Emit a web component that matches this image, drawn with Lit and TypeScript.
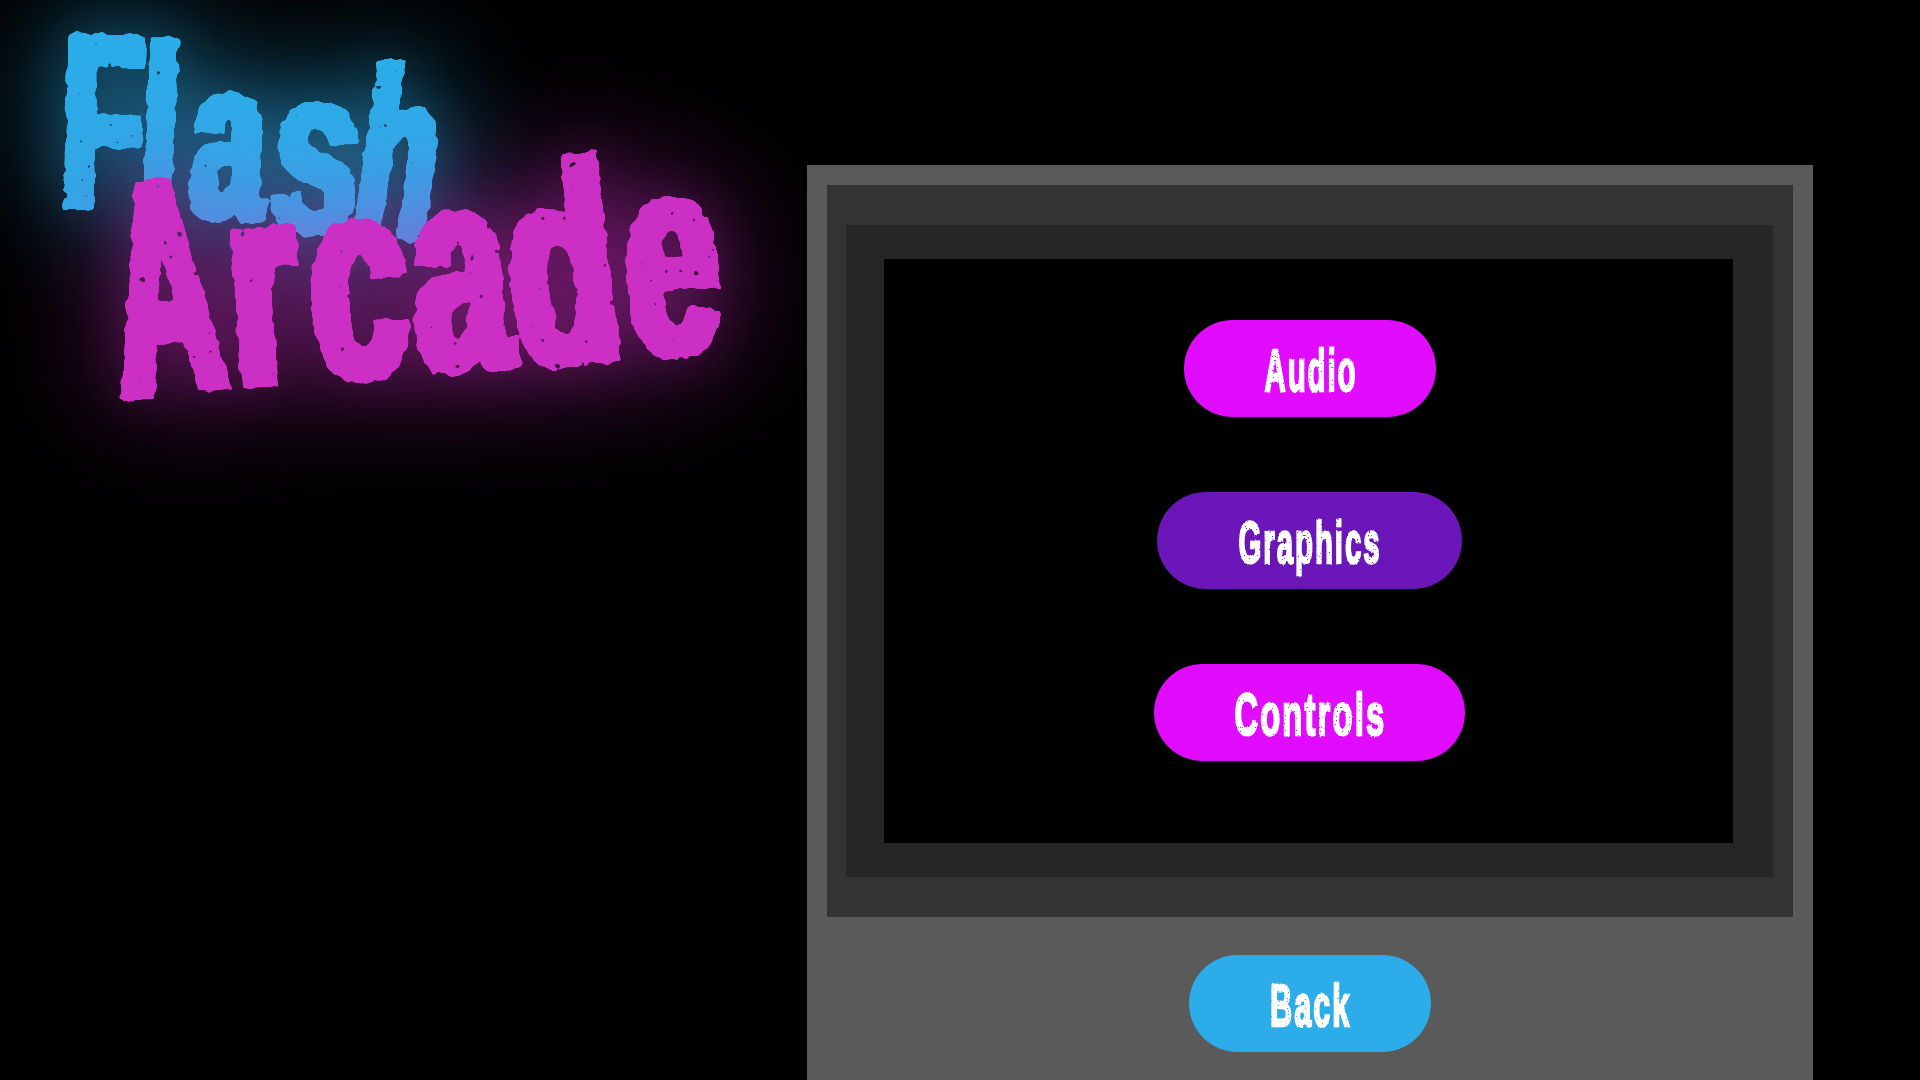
import { LitElement, html, css } from "lit";
import { customElement } from "lit/decorators.js";

interface Glyph { c: string; x: number; y: number; r: number; sx: number; sy: number; }

const FLASH: Glyph[] = [
  { c: "F", x: 60, y: 208, r: 1.3, sx: 0.58, sy: 1.08 },
  { c: "l", x: 139, y: 212, r: 2.5, sx: 0.56, sy: 1.03 },
  { c: "a", x: 188, y: 217, r: 3, sx: 0.575, sy: 1.0 },
  { c: "s", x: 268, y: 229, r: 5, sx: 0.66, sy: 1.03 },
  { c: "h", x: 350, y: 231, r: 8, sx: 0.55, sy: 1.03 },
];
const ARCADE: Glyph[] = [
  { c: "A", x: 124, y: 397, r: -6.5, sx: 0.52, sy: 1.08 },
  { c: "r", x: 236, y: 385, r: -4.5, sx: 0.62, sy: 1.02 },
  { c: "c", x: 315, y: 379, r: -3, sx: 0.62, sy: 1.02 },
  { c: "a", x: 419, y: 371, r: -4, sx: 0.61, sy: 1.02 },
  { c: "d", x: 519, y: 368, r: -6.6, sx: 0.63, sy: 1.0 },
  { c: "e", x: 630, y: 356, r: -3, sx: 0.6, sy: 1.02 },
];

const place = (g: Glyph) => `transform: translate(${g.x}px, ${g.y}px) rotate(${g.r}deg) scale(${g.sx}, ${g.sy})`;

@customElement("app-root")
export class AppRoot extends LitElement {
  static styles = css`
    :host { display: block; width: 1920px; height: 1080px; background: #000; overflow: hidden; position: relative; }
    .defs { position: absolute; width: 0; height: 0; }
    .page { display: flex; position: relative; z-index: 1; height: 1080px; padding: 165px 107px 0 807px; box-sizing: border-box; }
    .logo { position: absolute; left: 0; top: 0; width: 800px; height: 450px; z-index: 0; }
    .glow { position: absolute; left: 0; top: 0; width: 800px; height: 450px; }
    .glow-flash { filter: drop-shadow(0 0 26px rgba(44,172,232,.22)) drop-shadow(0 0 60px rgba(44,172,232,.8)); }
    .glow-arcade { filter: drop-shadow(0 0 26px rgba(203,47,196,.2)) drop-shadow(0 0 60px rgba(203,47,196,.62)); }
    .word { position: absolute; left: 0; top: 0; width: 800px; height: 450px; margin: 0; font-family: "Liberation Sans", Arial, sans-serif; font-weight: 700; line-height: 1; filter: url(#rough-lg); }
    .word span { position: absolute; left: 0; top: -.8465em; transform-origin: 0 .8465em; }
    .flash { font-size: 230px; color: #2cace8; -webkit-text-stroke: 5px #2cace8; }
    .arcade { font-size: 280px; color: #cb2fc4; -webkit-text-stroke: 8px #cb2fc4; }
    .panel { flex: 1; background: #5a5a5a; padding: 20px 20px 0; display: flex; flex-direction: column; height: 915px; box-sizing: border-box; }
    .f1 { background: #333; padding: 40px 20px 40px 19px; height: 732px; box-sizing: border-box; flex: none; }
    .f2 { background: #262626; padding: 34px 40px 34px 38px; height: 100%; box-sizing: border-box; }
    .screen { background: #000; height: 100%; display: flex; flex-direction: column; align-items: center; gap: 75px; padding: 61px 0 0 2px; box-sizing: border-box; }
    .foot { display: flex; justify-content: center; padding-top: 38px; }
    .btn { height: 97px; padding-top: 3px; box-sizing: border-box; border-radius: 48.5px; display: flex; align-items: center; justify-content: center; color: #fff; font-family: "Liberation Sans", Arial, sans-serif; font-weight: 700; font-size: 60px; }
    .btn span { display: inline-block; white-space: nowrap; letter-spacing: 4px; filter: url(#rough-sm); -webkit-text-stroke: 2.5px #fff; }
    .audio { width: 252px; } .graphics { width: 305px; } .controls { width: 311px; } .back { width: 242px; }
    .audio span { transform: translateX(1px) scaleX(.49); }
    .graphics span { transform: translateX(1px) scaleX(.49); }
    .controls span { transform: translateX(1px) scaleX(.545); }
    .back span { transform: translateX(1px) scaleX(.51); }
    .magenta { background: #e10bff; }
    .purple { background: #6a16b8; }
    .blue { background: #2cace8; }
  `;
  render() {
    return html`
      <svg class="defs" aria-hidden="true">
        <defs>
          <filter id="rough-lg" x="0" y="0" width="100%" height="100%" filterUnits="objectBoundingBox" color-interpolation-filters="sRGB">
            <feMorphology in="SourceGraphic" operator="dilate" radius="4 0" result="fat"/>
            <feTurbulence type="fractalNoise" baseFrequency="0.08" numOctaves="3" seed="4" result="n"/>
            <feDisplacementMap in="fat" in2="n" scale="8" xChannelSelector="R" yChannelSelector="G" result="d"/>
            <feTurbulence type="fractalNoise" baseFrequency="0.13" numOctaves="2" seed="11" result="s"/>
            <feColorMatrix in="s" type="matrix" values="0 0 0 0 0 0 0 0 0 0 0 0 0 0 0 0 0 0 -40 10" result="holes"/>
            <feComposite in="d" in2="holes" operator="out" result="c"/>
            <feGaussianBlur in="c" stdDeviation="0.8" result="b"/>
            <feComponentTransfer in="b"><feFuncA type="linear" slope="6" intercept="-2.5"/></feComponentTransfer>
          </filter>
          <filter id="rough-sm" x="-5%" y="-5%" width="110%" height="110%" color-interpolation-filters="sRGB">
            <feTurbulence type="fractalNoise" baseFrequency="0.3 0.5" numOctaves="2" seed="3" result="n"/>
            <feDisplacementMap in="SourceGraphic" in2="n" scale="3" xChannelSelector="R" yChannelSelector="G" result="d"/>
            <feTurbulence type="fractalNoise" baseFrequency="0.45 0.7" numOctaves="1" seed="8" result="s"/>
            <feColorMatrix in="s" type="matrix" values="0 0 0 0 0 0 0 0 0 0 0 0 0 0 0 0 0 0 -30 9" result="holes"/>
            <feComposite in="d" in2="holes" operator="out"/>
          </filter>
        </defs>
      </svg>
      <div class="logo">
        <div class="glow glow-flash"><h1 class="word flash">${FLASH.map((g) => html`<span style=${place(g)}>${g.c}</span>`)}</h1></div>
        <div class="glow glow-arcade"><h1 class="word arcade">${ARCADE.map((g) => html`<span style=${place(g)}>${g.c}</span>`)}</h1></div>
      </div>
      <div class="page">
        <div class="panel">
          <div class="f1"><div class="f2"><div class="screen">
            <div class="btn magenta audio"><span>Audio</span></div>
            <div class="btn purple graphics"><span>Graphics</span></div>
            <div class="btn magenta controls"><span>Controls</span></div>
          </div></div></div>
          <div class="foot"><div class="btn blue back"><span>Back</span></div></div>
        </div>
      </div>
    `;
  }
}
